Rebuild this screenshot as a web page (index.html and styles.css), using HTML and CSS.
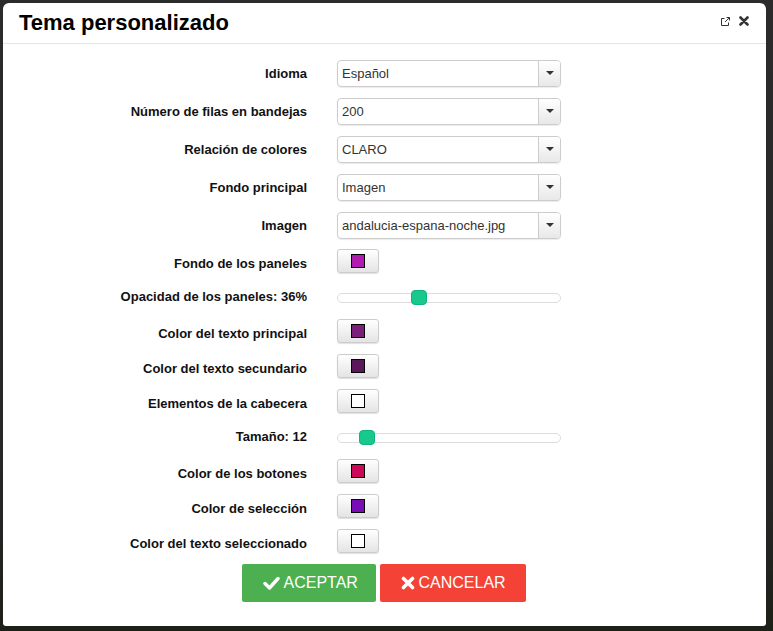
FILE: index.html
```html
<!DOCTYPE html>
<html lang="es">
  <head>
    <meta charset="UTF-8" />
    <title>Tema personalizado</title>
    <link rel="stylesheet" href="styles.css">
  </head>
  <body>
    <div class="dialog">
      <div class="dialog-header">
        <div class="dialog-title">Tema personalizado</div>
        <div class="dialog-tools">
          <svg class="tool-popout" width="9" height="9" viewBox="0 0 9 9">
            <path d="M3.5 1.5H0.5V8.5H7.5V5.5" fill="none" stroke="#333" stroke-width="1"/>
            <path d="M4 5L8.5 0.5M5.5 0.5H8.5V3.5" fill="none" stroke="#333" stroke-width="1"/>
          </svg>
          <svg class="tool-close" width="10" height="10" viewBox="0 0 10 10">
            <path d="M1.5 1.5L8.5 8.5M8.5 1.5L1.5 8.5" stroke="#333" stroke-width="2.6" stroke-linecap="round"/>
          </svg>
        </div>
      </div>

      <div class="dialog-body">
        <div class="row row-select">
          <label>Idioma</label>
          <div class="select"><span>Español</span><i class="caret"></i></div>
        </div>
        <div class="row row-select">
          <label>Número de filas en bandejas</label>
          <div class="select"><span>200</span><i class="caret"></i></div>
        </div>
        <div class="row row-select">
          <label>Relación de colores</label>
          <div class="select"><span>CLARO</span><i class="caret"></i></div>
        </div>
        <div class="row row-select">
          <label>Fondo principal</label>
          <div class="select"><span>Imagen</span><i class="caret"></i></div>
        </div>
        <div class="row row-select">
          <label>Imagen</label>
          <div class="select"><span>andalucia-espana-noche.jpg</span><i class="caret"></i></div>
        </div>
        <div class="row row-color row-first">
          <label>Fondo de los paneles</label>
          <button class="color-btn"><span class="swatch swatch-panels"></span></button>
        </div>
        <div class="row">
          <label>Opacidad de los paneles: 36%</label>
          <div class="slider"><span class="handle" style="left: 73px"></span></div>
        </div>
        <div class="row row-color">
          <label>Color del texto principal</label>
          <button class="color-btn"><span class="swatch swatch-main"></span></button>
        </div>
        <div class="row row-color">
          <label>Color del texto secundario</label>
          <button class="color-btn"><span class="swatch swatch-second"></span></button>
        </div>
        <div class="row row-color">
          <label>Elementos de la cabecera</label>
          <button class="color-btn"><span class="swatch swatch-white"></span></button>
        </div>
        <div class="row">
          <label>Tamaño: 12</label>
          <div class="slider"><span class="handle" style="left: 21px"></span></div>
        </div>
        <div class="row row-color">
          <label>Color de los botones</label>
          <button class="color-btn"><span class="swatch swatch-buttons"></span></button>
        </div>
        <div class="row row-color">
          <label>Color de selección</label>
          <button class="color-btn"><span class="swatch swatch-selection"></span></button>
        </div>
        <div class="row row-color">
          <label>Color del texto seleccionado</label>
          <button class="color-btn"><span class="swatch swatch-white"></span></button>
        </div>

        <div class="actions">
          <button class="btn btn-ok">
            <svg width="17" height="14" viewBox="0 0 17 14">
              <path d="M2 7.5L6.5 12L15 2.5" fill="none" stroke="#fff" stroke-width="3.4" stroke-linecap="round" stroke-linejoin="round"/>
            </svg>
            ACEPTAR
          </button>
          <button class="btn btn-cancel">
            <svg width="14" height="14" viewBox="0 0 14 14">
              <path d="M2.5 2.5L11.5 11.5M11.5 2.5L2.5 11.5" stroke="#fff" stroke-width="3.6" stroke-linecap="round"/>
            </svg>
            CANCELAR
          </button>
        </div>
      </div>
    </div>
  </body>
</html>
```

FILE: styles.css
```css
* {
  margin: 0;
  padding: 0;
  box-sizing: border-box;
}

body {
  width: 773px;
  height: 631px;
  overflow: hidden;
  padding: 3px 0 0 3px;
  background: linear-gradient(#2b2b2b, #262626 80%, #1c2117);
  font-family: "Liberation Sans", Arial, sans-serif;
}

.dialog {
  width: 763px;
  height: 623px;
  background-color: #fff;
  border-radius: 6px 6px 3px 3px;
}

.dialog-header {
  display: flex;
  align-items: center;
  justify-content: space-between;
  height: 41px;
  padding: 0 17px 0 16px;
  border-bottom: 1px solid #e5e5e5;
}

.dialog-title {
  font-size: 22px;
  font-weight: bold;
  line-height: 40px;
  color: #000;
}

.dialog-tools {
  display: flex;
  align-items: center;
  gap: 9px;
  margin-top: -4px;
}

.dialog-body {
  display: flex;
  flex-direction: column;
  gap: 11px;
  padding: 16px 0 0 8px;
}

.row {
  display: grid;
  grid-template-columns: 296px 224px;
  column-gap: 30px;
  align-items: center;
  height: 24px;
}

.row-select {
  height: 27px;
}

.row-first {
  margin-top: -1px;
}

.row label {
  text-align: right;
  font-size: 13px;
  font-weight: bold;
  color: #111;
}

.row-color {
  align-items: start;
}

.row-color label {
  line-height: 30px;
}

.select {
  display: flex;
  align-items: center;
  height: 27px;
  border: 1px solid #ccc;
  border-radius: 4px;
  box-shadow: 0 1px 1px rgba(0, 0, 0, 0.08);
  font-size: 13px;
  color: #333;
  overflow: hidden;
}

.select span {
  flex: 1;
  padding-left: 4px;
  margin-top: -1px;
}

.caret {
  position: relative;
  width: 22px;
  height: 100%;
  border-left: 1px solid #ccc;
  background: linear-gradient(#fff, #e8e8e8);
}

.caret::after {
  content: "";
  position: absolute;
  left: 7px;
  top: 10px;
  border-left: 4px solid transparent;
  border-right: 4px solid transparent;
  border-top: 4px solid #333;
}

.color-btn {
  display: flex;
  align-items: center;
  justify-content: center;
  width: 42px;
  height: 24px;
  border: 1px solid #ccc;
  border-radius: 3px;
  background: linear-gradient(#fff, #e4e4e4);
  box-shadow: 0 1px 1px rgba(0, 0, 0, 0.12);
  cursor: pointer;
}

.swatch {
  width: 14px;
  height: 14px;
  border: 1px solid #000;
}

.swatch-panels { background-color: #b01bb0; }
.swatch-main { background-color: #7b1f7b; }
.swatch-second { background-color: #5a185a; }
.swatch-buttons { background-color: #cc0858; }
.swatch-selection { background-color: #7a0cb6; }
.swatch-white { background-color: #fff; }

.slider {
  position: relative;
  height: 10px;
  margin-top: 4px;
  border: 1px solid #dcdcdc;
  border-radius: 5px;
  background-color: #fff;
}

.handle {
  position: absolute;
  top: -4px;
  width: 16px;
  height: 15px;
  border: 1px solid #12b37d;
  border-radius: 4px;
  background-color: #17c98d;
}

.actions {
  display: flex;
  justify-content: center;
  gap: 4px;
  margin-left: -10px;
}

.btn {
  display: flex;
  align-items: center;
  gap: 4px;
  height: 38px;
  border: none;
  border-radius: 2px;
  color: #fff;
  font-family: "Liberation Sans", Arial, sans-serif;
  font-size: 16px;
  cursor: pointer;
}

.btn-ok {
  width: 134px;
  padding-left: 21px;
  background-color: #4caf50;
}

.btn-cancel {
  width: 146px;
  padding-left: 21px;
  background-color: #f44336;
}
```
